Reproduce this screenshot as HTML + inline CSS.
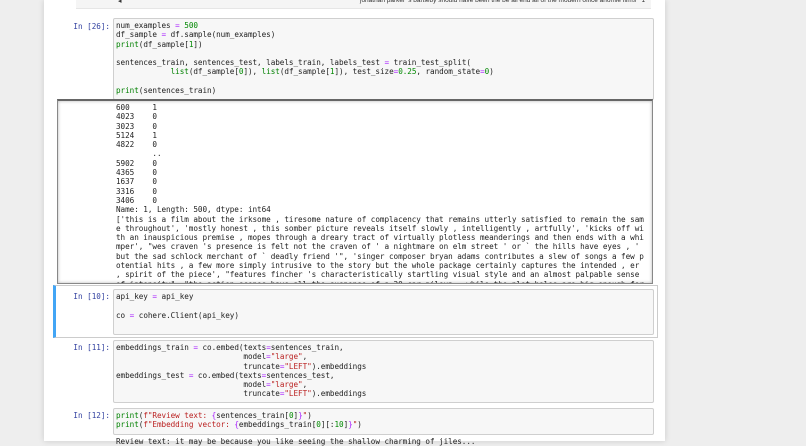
<!DOCTYPE html>
<html><head><style>
body{margin:0;width:806px;height:441px;overflow:hidden;background:#eeeeee;position:relative;font-family:"DejaVu Sans Mono",monospace}
.panel{position:absolute;left:44px;top:0;width:621px;height:441px;background:#fff;box-shadow:0 0 6px rgba(0,0,0,.15)}
.box{position:absolute;background:#f7f7f7;border:1px solid #cfcfcf;border-radius:2px}
pre{margin:0;font-family:"DejaVu Sans Mono",monospace;font-size:7.65px;line-height:9.3px;color:#222;position:absolute;white-space:pre;letter-spacing:-0.05px}
.p{position:absolute;font-family:"DejaVu Sans Mono",monospace;font-size:7.6px;color:#303f9f;width:60px;text-align:right}
.k{color:#008000}.n{color:#080}.o{color:#aa22ff}.s{color:#ba2121}
</style></head><body>
<div class="panel"></div>
<div style="position:absolute;left:76px;top:0;width:575px;height:8px;background:#f5f5f5;border-bottom:1px solid #e6e6e6"></div>
<div style="position:absolute;left:118px;top:-3px;font:7px sans-serif;color:#333">◂</div>
<div style="position:absolute;left:360px;top:-3px;font:6.5px 'Liberation Sans',sans-serif;color:#333;white-space:nowrap">jonathan parker 's bartleby should have been the be all end all of the modern office anomie films &nbsp; 1</div>

<div class="p" style="left:50px;top:22px">In [26]:</div>
<div class="box" style="left:113px;top:18px;width:539px;height:80px"></div>
<pre style="left:116px;top:21px">num_examples <span class="o">=</span> <span class="n">500</span>
df_sample <span class="o">=</span> df.sample(num_examples)
<span class="k">print</span>(df_sample[<span class="n">1</span>])

sentences_train, sentences_test, labels_train, labels_test <span class="o">=</span> train_test_split(
            <span class="k">list</span>(df_sample[<span class="n">0</span>]), <span class="k">list</span>(df_sample[<span class="n">1</span>]), test_size<span class="o">=</span><span class="n">0.25</span>, random_state<span class="o">=</span><span class="n">0</span>)

<span class="k">print</span>(sentences_train)</pre>

<div style="position:absolute;left:57px;top:99px;width:594px;height:182px;border:1px solid #888;border-top:2px solid #666;box-shadow:inset 0 0 3px rgba(0,0,0,.3);overflow:hidden;background:#fff">
<pre style="left:58px;top:2px">600     1
4023    0
3023    0
5124    1
4822    0
        ..
5902    0
4365    0
1637    0
3316    0
3406    0
Name: 1, Length: 500, dtype: int64
['this is a film about the irksome , tiresome nature of complacency that remains utterly satisfied to remain the sam
e throughout', 'mostly honest , this somber picture reveals itself slowly , intelligently , artfully', 'kicks off wi
th an inauspicious premise , mopes through a dreary tract of virtually plotless meanderings and then ends with a whi
mper', "wes craven 's presence is felt not the craven of ' a nightmare on elm street ' or ` the hills have eyes , '
but the sad schlock merchant of ` deadly friend '", 'singer composer bryan adams contributes a slew of songs a few p
otential hits , a few more simply intrusive to the story but the whole package certainly captures the intended , er
, spirit of the piece', "features fincher 's characteristically startling visual style and an almost palpable sense
of intensity", "the action scenes have all the suspense of a 20 car pileup , while the plot holes are big enough for</pre>
</div>

<div style="position:absolute;left:53px;top:285px;width:601px;height:51px;border:1px solid #ccc;border-left:3px solid #42a5f5"></div>
<div class="p" style="left:50px;top:292px">In [10]:</div>
<div class="box" style="left:113px;top:289px;width:539px;height:44px"></div>
<pre style="left:116px;top:292px">api_key <span class="o">=</span> api_key

co <span class="o">=</span> cohere.Client(api_key)</pre>

<div class="p" style="left:50px;top:343px">In [11]:</div>
<div class="box" style="left:113px;top:340px;width:539px;height:61px"></div>
<pre style="left:116px;top:343px">embeddings_train <span class="o">=</span> co.embed(texts<span class="o">=</span>sentences_train,
                            model<span class="o">=</span><span class="s">"large"</span>,
                            truncate<span class="o">=</span><span class="s">"LEFT"</span>).embeddings
embeddings_test <span class="o">=</span> co.embed(texts<span class="o">=</span>sentences_test,
                            model<span class="o">=</span><span class="s">"large"</span>,
                            truncate<span class="o">=</span><span class="s">"LEFT"</span>).embeddings</pre>

<div class="p" style="left:50px;top:411px">In [12]:</div>
<div class="box" style="left:113px;top:408px;width:539px;height:25px"></div>
<pre style="left:116px;top:411px"><span class="k">print</span>(<span class="s">f"Review text: </span><span class="o">{</span>sentences_train[<span class="n">0</span>]<span class="o">}</span><span class="s">"</span>)
<span class="k">print</span>(<span class="s">f"Embedding vector: </span><span class="o">{</span>embeddings_train[<span class="n">0</span>][:<span class="n">10</span>]<span class="o">}</span><span class="s">"</span>)</pre>
<pre style="left:116px;top:437px">Review text: it may be because you like seeing the shallow charming of jiles...</pre>
</body></html>
